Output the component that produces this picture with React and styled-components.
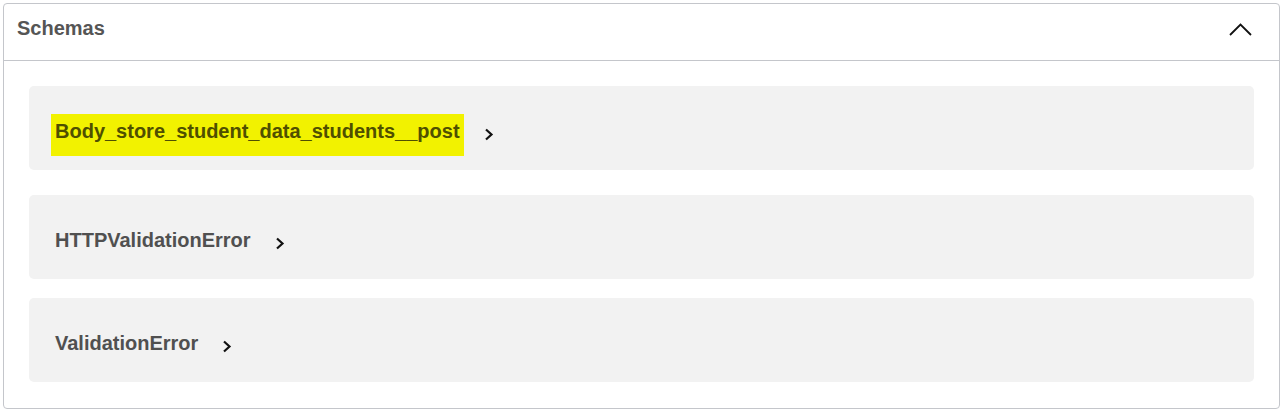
import React from "react";
import styled, { createGlobalStyle } from "styled-components";

const Global = createGlobalStyle`
  html, body { margin: 0; padding: 0; background: #fff; }
  body { font-family: "Liberation Sans", Arial, sans-serif; }
`;

const Page = styled.div`
  padding: 3px 2px 0 3px;
`;

const Section = styled.section`
  border: 1px solid #c4c6cb;
  border-radius: 4px;
  background: #fff;
`;

const Header = styled.div`
  height: 57px;
  box-sizing: border-box;
  display: flex;
  align-items: center;
  justify-content: space-between;
  padding: 0 27px 8px 13px;
  border-bottom: 1px solid #c4c6cb;
`;

const Title = styled.h4`
  margin: 0;
  font-size: 20px;
  line-height: 24px;
  font-weight: 700;
  color: #555555;
`;

const Body = styled.div`
  padding: 25px 25px 26px 25px;
  display: flex;
  flex-direction: column;
`;

const Model = styled.div`
  height: 84px;
  box-sizing: border-box;
  background: #f2f2f2;
  border-radius: 5px;
  display: flex;
  align-items: center;
  padding: 5px 0 0 22px;
  margin-bottom: ${(p) => (p.$last ? "0" : p.$gap + "px")};
`;

const ModelTitle = styled.span`
  font-size: 20px;
  line-height: 24px;
  font-weight: 700;
  color: ${(p) => (p.$highlight ? "#4f4f00" : "#505050")};
  background: ${(p) => (p.$highlight ? "#f2f200" : "transparent")};
  padding: ${(p) => (p.$highlight ? "5px 4px 13px" : "0 4px")};
  margin-top: ${(p) => (p.$highlight ? "8px" : "0")};
`;

const Arrow = styled.svg`
  margin-left: 20px;
  margin-top: 7px;
  flex: none;
`;

const Chevron = () => (
  <Arrow width="10" height="13" viewBox="0 0 10 13">
    <polyline points="2,1.5 7.5,6.5 2,11.5" fill="none" stroke="#111" strokeWidth="2.2" />
  </Arrow>
);

const Toggle = styled.svg`
  margin-top: 2px;
  flex: none;
`;

const models = [
  { name: "Body_store_student_data_students__post", highlight: true, gap: 25 },
  { name: "HTTPValidationError", gap: 19 },
  { name: "ValidationError", gap: 0 },
];

export default function App() {
  return (
    <Page>
      <Global />
      <Section>
        <Header>
          <Title>Schemas</Title>
          <Toggle width="23" height="13" viewBox="0 0 23 13">
            <polyline points="1,12 11.5,1.5 22,12" fill="none" stroke="#111" strokeWidth="1.8" />
          </Toggle>
        </Header>
        <Body>
          {models.map((m, i) => (
            <Model key={m.name} $gap={m.gap} $last={i === models.length - 1}>
              <ModelTitle $highlight={m.highlight}>{m.name}</ModelTitle>
              <Chevron />
            </Model>
          ))}
        </Body>
      </Section>
    </Page>
  );
}
